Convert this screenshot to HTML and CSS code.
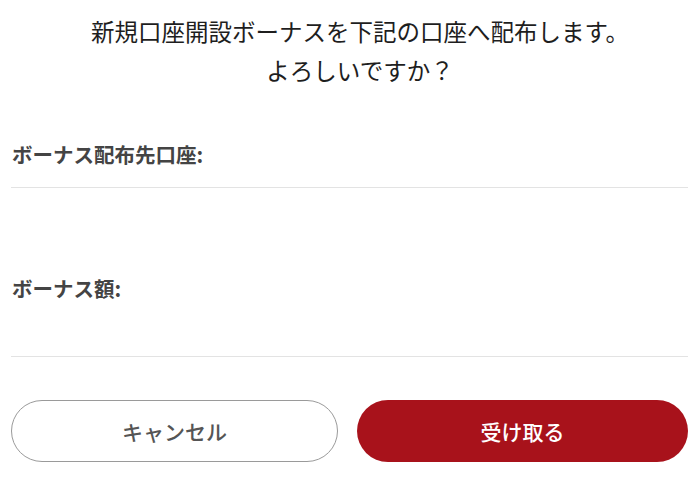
FILE: index.html
```html
<!DOCTYPE html>
<html lang="ja">
<head>
<meta charset="utf-8">
<link rel="stylesheet" href="styles.css">
</head>
<body>
<div class="dialog">
  <p class="message">新規口座開設ボーナスを下記の口座へ配布します。<br>よろしいですか？</p>
  <div class="field field-account">
    <div class="label">ボーナス配布先口座:</div>
  </div>
  <div class="field field-amount">
    <div class="label">ボーナス額:</div>
  </div>
  <div class="actions">
    <button class="btn btn-cancel">キャンセル</button>
    <button class="btn btn-ok">受け取る</button>
  </div>
</div>
</body>
</html>
```

FILE: styles.css
```css
html, body {
  margin: 0;
  padding: 0;
  background: #ffffff;
}
body {
  font-family: "Noto Sans CJK JP", "Noto Sans", sans-serif;
  color: #222;
}
.dialog {
  padding: 12px 12px 0 11px;
}
.message {
  margin: 0;
  padding-left: 21px;
  text-align: center;
  font-size: 23.5px;
  line-height: 39px;
  color: #1e1e1e;
  font-weight: 400;
}
.field {
  border-bottom: 1px solid #e3e3e3;
}
.label {
  font-size: 20.5px;
  line-height: 30px;
  font-weight: 700;
  color: #444;
  padding-left: 1px;
}
.field-account {
  margin-top: 49px;
  padding-bottom: 18px;
}
.field-amount {
  margin-top: 85px;
  padding-bottom: 53px;
}
.actions {
  display: flex;
  gap: 19px;
  margin-top: 43px;
}
.btn {
  height: 62px;
  border-radius: 31px;
  font-family: "Noto Sans CJK JP", "Noto Sans", sans-serif;
  font-size: 21px;
  font-weight: 500;
  cursor: pointer;
}
.btn-cancel {
  flex: 0 0 327px;
  background: #fff;
  border: 1px solid #9a9a9a;
  color: #555;
}
.btn-ok {
  flex: 1;
  background: #a8121b;
  border: none;
  color: #fff;
}
```
